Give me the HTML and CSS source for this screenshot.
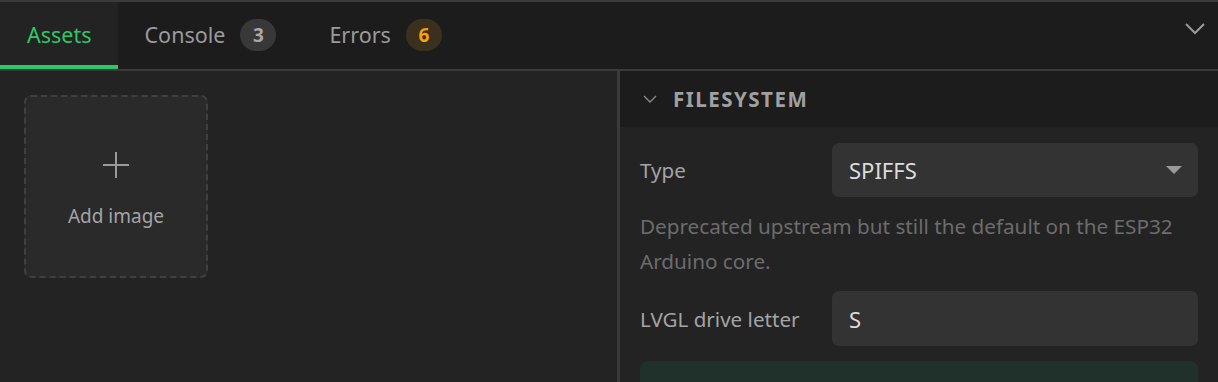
FILE: index.html
```html
<!DOCTYPE html>
<html lang="en">
<head>
    <meta charset="UTF-8">
    <title>Assets</title>
    <link rel="stylesheet" href="styles.css">
</head>
<body>

    <!-- Tabs -->
    <div class="tabbar">
        <div class="tab active">Assets</div>
        <div class="tab">Console <span class="badge">3</span></div>
        <div class="tab">Errors <span class="badge badge-warn">6</span></div>
        <div class="tabbar-spacer"></div>
        <button class="collapse" aria-label="Collapse">
            <svg width="22" height="14" viewBox="0 0 22 14"><path d="M2 2 L11 11 L20 2" fill="none" stroke="#9a9a9a" stroke-width="2"/></svg>
        </button>
    </div>

    <div class="main">
        <!-- Assets -->
        <div class="assets">
            <div class="add-card">
                <svg width="28" height="28" viewBox="0 0 28 28"><path d="M14 1 V27 M1 14 H27" stroke="#9a9a9a" stroke-width="2"/></svg>
                <span>Add image</span>
            </div>
        </div>

        <!-- Settings -->
        <div class="settings">
            <div class="section-head">
                <svg width="14" height="8" viewBox="0 0 14 8"><path d="M1 1 L7 7 L13 1" fill="none" stroke="#8a8a8a" stroke-width="1.4"/></svg>
                <span>FILESYSTEM</span>
            </div>
            <div class="section-body">
                <div class="field">
                    <label>Type</label>
                    <div class="select">
                        <span>SPIFFS</span>
                        <svg width="16" height="8" viewBox="0 0 16 8"><path d="M0 0 H16 L8 8 Z" fill="#9a9a9a"/></svg>
                    </div>
                </div>
                <p class="help">Deprecated upstream but still the default on the ESP32 Arduino core.</p>
                <div class="field">
                    <label>LVGL drive letter</label>
                    <div class="input">S</div>
                </div>
                <div class="note"></div>
            </div>
        </div>
    </div>

</body>
</html>
```

FILE: styles.css
```css
/* General */
body {
    margin: 0;
    padding: 0;
    font-family: 'Noto Sans', 'Open Sans', sans-serif;
    background: #232323;
    color: #9a9a9a;
    height: 382px;
    overflow: hidden;
    border-top: 2px solid #3a3a3a;
    box-sizing: border-box;
}

/* Tabs */
.tabbar {
    display: flex;
    height: 67px;
    background: #1c1c1c;
    border-bottom: 2px solid #3a3a3a;
}

.tab {
    display: flex;
    align-items: center;
    gap: 15px;
    padding: 2px 26px 0 27px;
    font-size: 21.5px;
    color: #9a9a9a;
    box-sizing: border-box;
    border-bottom: 4px solid transparent;
}

.tab.active {
    color: #2ec866;
    background: #232323;
    border-bottom-color: #2ec866;
}

.badge {
    display: inline-flex;
    align-items: center;
    justify-content: center;
    width: 36px;
    height: 32px;
    border-radius: 16px;
    background: #383838;
    color: #a8a8a8;
    font-size: 19px;
    font-weight: 700;
}

.badge-warn {
    background: #3b2f1e;
    color: #f5a20c;
}

.tabbar-spacer {
    flex: 1;
}

.collapse {
    background: none;
    border: none;
    padding: 0 12px 0 0;
    margin: 0;
    height: 54px;
    display: flex;
    align-items: center;
}

/* Main area */
.main {
    display: flex;
    height: 311px;
}

.assets {
    width: 620px;
    flex: none;
    padding: 24px;
    box-sizing: border-box;
    border-right: 3px solid #3a3a3a;
}

.add-card {
    width: 184px;
    height: 183px;
    box-sizing: border-box;
    border: 2px dashed #404040;
    border-radius: 7px;
    background: #2a2a2a;
    display: flex;
    flex-direction: column;
    align-items: center;
    padding-top: 54px;
    gap: 24px;
    font-size: 19px;
    color: #a4a4a4;
}

.settings {
    flex: 1;
    display: flex;
    flex-direction: column;
    overflow: hidden;
}

.section-head {
    flex: none;
    display: flex;
    align-items: center;
    gap: 16px;
    height: 56px;
    padding-left: 23px;
    background: #1c1c1c;
    font-size: 20.5px;
    font-weight: 700;
    letter-spacing: 1.5px;
    color: #a0a0a0;
}

.section-body {
    padding: 16px 20px 0 20px;
}

.field {
    display: flex;
    align-items: center;
}

.field label {
    width: 192px;
    flex: none;
    font-size: 20.6px;
    color: #a4a4a4;
}

.select, .input {
    flex: 1;
    height: 54px;
    box-sizing: border-box;
    background: #333333;
    border-radius: 7px;
    padding: 0 16px 0 17px;
    display: flex;
    align-items: center;
    justify-content: space-between;
    font-size: 22px;
    color: #dcdcdc;
}

.input {
    height: 55px;
}

.help {
    margin: 12px 0;
    font-size: 20.7px;
    line-height: 35px;
    color: #6c6c6c;
}

.note {
    margin-top: 15px;
    height: 60px;
    border-radius: 8px;
    background: #20302a;
}
```
